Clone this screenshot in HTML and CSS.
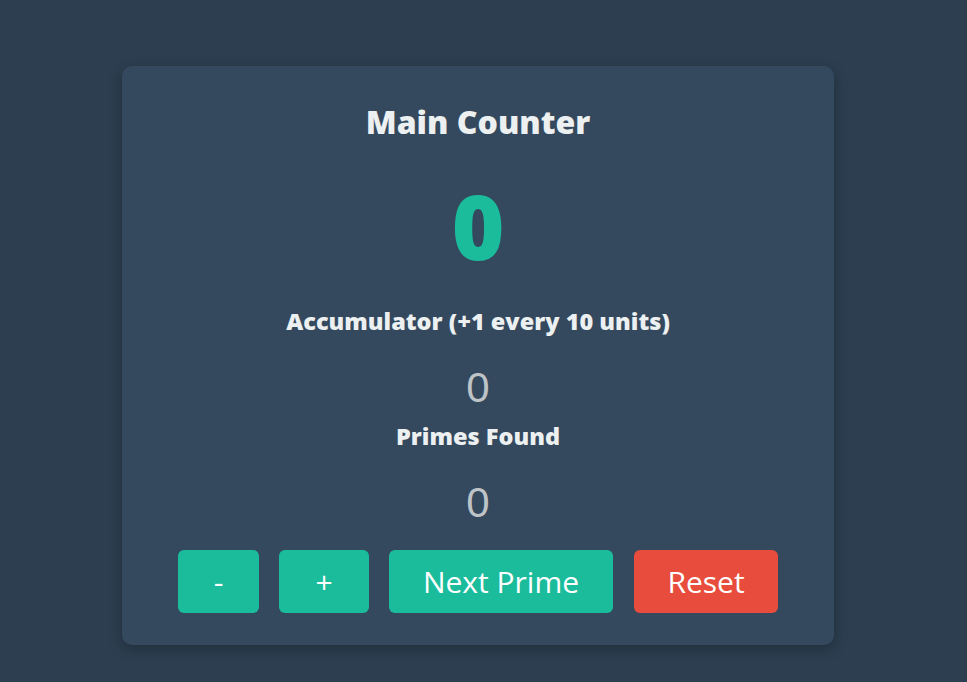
FILE: index.html
```html
<!DOCTYPE html>
<html>
<head>
<meta charset="utf-8">
<link rel="stylesheet" href="styles.css">
</head>
<body>
<main class="card">
  <h1 class="title">Main Counter</h1>
  <div class="main-value">0</div>
  <h2 class="label">Accumulator (+1 every 10 units)</h2>
  <div class="value">0</div>
  <h2 class="label">Primes Found</h2>
  <div class="value">0</div>
  <div class="buttons">
    <button class="btn btn-minus">-</button>
    <button class="btn btn-plus">+</button>
    <button class="btn btn-next">Next Prime</button>
    <button class="btn btn-reset">Reset</button>
  </div>
</main>
</body>
</html>
```
FILE: styles.css
```css
html, body {
  margin: 0;
  padding: 0;
  height: 100%;
}
body {
  background: #2c3e50;
  font-family: "Open Sans", "Noto Sans", sans-serif;
  color: #ecf0f1;
  display: flex;
  justify-content: flex-start;
  align-items: flex-start;
}
.card {
  margin: 66px 0 0 122px;
  width: 712px;
  height: 579px;
  box-sizing: border-box;
  background: #34495e;
  border-radius: 10px;
  box-shadow: 0 4px 14px rgba(0, 0, 0, 0.25);
  display: flex;
  flex-direction: column;
  align-items: center;
  padding-top: 36px;
}
.title {
  margin: 0;
  font-size: 32px;
  font-weight: 800;
  line-height: 40px;
}
.main-value {
  margin-top: 37px;
  font-size: 90px;
  font-weight: 800;
  line-height: 92px;
  color: #1abc9c;
}
.label {
  margin: 35px 0 0;
  font-size: 23.5px;
  font-weight: 800;
  line-height: 30px;
}
.value {
  margin-top: 32px;
  font-family: "Liberation Sans", Arial, sans-serif;
  font-size: 42px;
  line-height: 40px;
  color: #bdc3c7;
}
.value + .label {
  margin-top: 13px;
}
.buttons {
  margin-top: 27px;
  display: flex;
  gap: 20px;
}
.btn {
  border: none;
  border-radius: 6px;
  background: #1abc9c;
  color: #fff;
  font-family: "Open Sans", sans-serif;
  font-size: 30px;
  height: 63px;
  padding: 0;
  cursor: pointer;
}
.btn-minus { width: 81px; }
.btn-plus { width: 90px; }
.btn-next { width: 224px; }
.btn-reset { width: 144px; margin-left: 1px; background: #e74c3c; }
```
